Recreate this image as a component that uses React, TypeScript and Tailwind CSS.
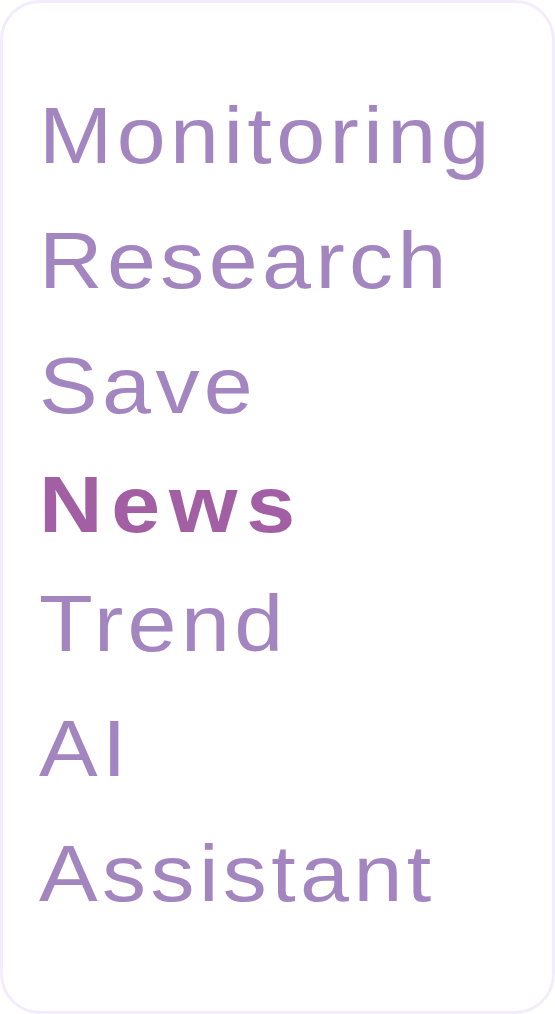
const ITEMS = [
  { label: 'Monitoring' },
  { label: 'Research' },
  { label: 'Save' },
  { label: 'News', active: true },
  { label: 'Trend' },
  { label: 'AI' },
  { label: 'Assistant' },
];

export default function App() {
  return (
    <div className="w-[555px] h-[1014px] bg-white" style={{ fontFamily: '"Liberation Sans", Arial, sans-serif' }}>
      <nav className="h-full rounded-[40px] border-[3px] border-[#f3ecfd] bg-white pt-[70px] pl-[36px] overflow-hidden">
        <ul className="flex flex-col">
          {ITEMS.map((item) => (
            <li
              key={item.label}
              className={
                item.active
                  ? 'origin-left scale-x-110 text-[80px] leading-[113px] font-bold tracking-[0.1em] text-[#a35fa3] whitespace-nowrap'
                  : 'origin-left scale-x-110 text-[80px] leading-[125px] tracking-[0.05em] text-[#a386c0] whitespace-nowrap'
              }
            >
              {item.label}
            </li>
          ))}
        </ul>
      </nav>
    </div>
  );
}
